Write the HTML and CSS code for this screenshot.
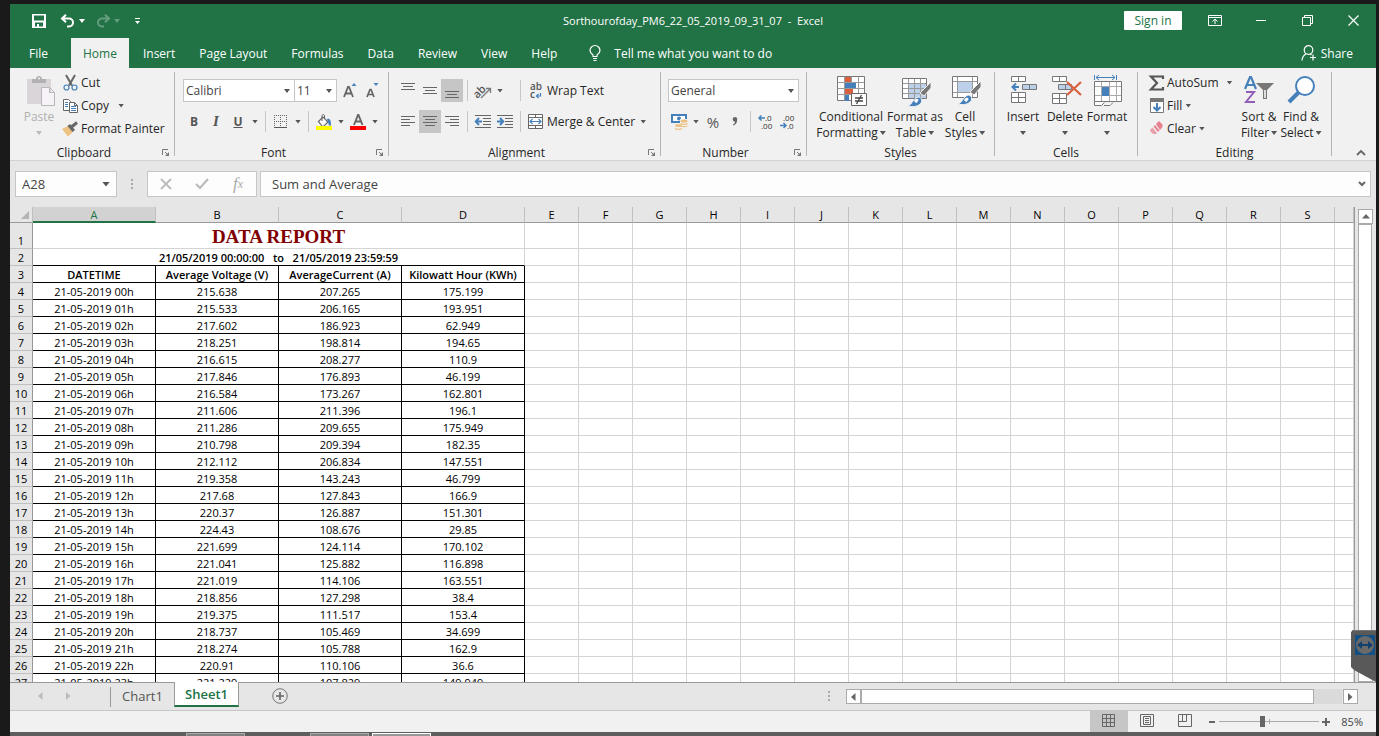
FILE: index.html
```
<!DOCTYPE html>
<html lang="en">
<head>
    <meta charset="UTF-8">
    <meta name="viewport" content="width=device-width, initial-scale=1.0">
    <title>Sorthourofday_PM6_22_05_2019_09_31_07 - Excel</title>
    <link rel="stylesheet" href="styles.css">
</head>
<body>
    <div class="window">
        <!-- Title bar -->
        <header class="titlebar">
            <div class="quick-access">
                <button class="qa-save" aria-label="Save"><svg width="14" height="14" viewBox="0 0 14 14"><path d="M0 0h14v14H0zM2 1.500v5h10v-5zM3 8.500V12.500h2V10h2v2.500h4V8.500z" fill="#fff" fill-rule="evenodd"/></svg></button>
                <button class="qa-undo" aria-label="Undo"><svg width="16" height="14" viewBox="0 0 16 14"><path d="M2 4.500h7a4 4 0 0 1 0 8H7M6 .8L2 4.500l4 3.700" fill="none" stroke="#fff" stroke-width="2"/></svg><span class="caret light"></span></button>
                <button class="qa-redo" aria-label="Redo"><svg width="16" height="14" viewBox="0 0 16 14"><path d="M14 4.500H7a4 4 0 0 0 0 8h2M10 .8l4 3.700-4 3.700" fill="none" stroke="#fff" stroke-width="2"/></svg><span class="caret light"></span></button>
                <button class="qa-more" aria-label="Customize"><svg width="7" height="7" viewBox="0 0 7 7"><path d="M1 0h5v1H1zM1 3h5L3.500 6z" fill="#fff"/></svg></button>
            </div>
            <div class="doc-title">Sorthourofday_PM6_22_05_2019_09_31_07&nbsp; -&nbsp; Excel</div>
            <div class="window-controls">
                <button class="sign-in">Sign in</button>
                <button class="win-btn" aria-label="Ribbon display"><svg width="14" height="11" viewBox="0 0 14 11"><path d="M.5.5h13v10H.5zM.5 2.500h13M7 9V4M4.500 6.500L7 4l2.500 2.500" fill="none" stroke="#fff"/></svg></button>
                <button class="win-btn" aria-label="Minimize"><svg width="10" height="11" viewBox="0 0 10 11"><path d="M0 5.500h10" stroke="#fff"/></svg></button>
                <button class="win-btn" aria-label="Restore"><svg width="11" height="11" viewBox="0 0 11 11"><path d="M.5 2.500h8v8h-8zM2.500 2.500v-2h8v8h-2" fill="none" stroke="#fff"/></svg></button>
                <button class="win-btn" aria-label="Close"><svg width="11" height="11" viewBox="0 0 11 11"><path d="M.5.5l10 10M10.500.5l-10 10" stroke="#fff" stroke-width="1.200"/></svg></button>
            </div>
        </header>

        <!-- Ribbon tabs -->
        <nav class="tabs">
            <button class="tab file">File</button>
            <button class="tab active">Home</button>
            <button class="tab">Insert</button>
            <button class="tab">Page Layout</button>
            <button class="tab">Formulas</button>
            <button class="tab">Data</button>
            <button class="tab">Review</button>
            <button class="tab">View</button>
            <button class="tab">Help</button>
            <button class="tell-me"><svg width="12" height="17" viewBox="0 0 12 17"><path d="M4 11.500V10C2 8.500 1 7.200 1 5.500a5 5 0 0 1 10 0C11 7.200 10 8.500 8 10v1.500zM4 13.500h4M4.500 15.500h3" fill="none" stroke="#fff" stroke-width="1.200"/></svg>Tell me what you want to do</button>
            <button class="share"><svg width="16" height="16" viewBox="0 0 16 16"><circle cx="7.500" cy="5" r="4.300" fill="none" stroke="#fff" stroke-width="1.200"/><path d="M1 15.500c.3-3.500 1.800-5.500 4-6.500M9 9l1.500 1M12 9.500v6M9 12.500h6" fill="none" stroke="#fff" stroke-width="1.200"/></svg>Share</button>
        </nav>

        <!-- Ribbon -->
        <div class="ribbon">
            <section class="group clipboard">
                <div class="group-body">
                    <button class="big-btn disabled">
                        <svg width="32" height="32" viewBox="0 0 32 32"><path d="M4 4h24v25H4z" fill="#d9d5d9"/><path d="M9 8V4h4c0-4 6-4 6 0h4v4z" fill="#b3b0b3"/><circle cx="16" cy="3.500" r="1" fill="#f1f1f1"/><path d="M18.500 12.500h8l5 5v13h-13zM26.500 12.500v5h5" fill="#f7f2f7" stroke="#b9b6b9"/></svg>
                        <span>Paste</span><span class="line2"><i class="caret"></i></span>
                    </button>
                    <div class="small-col">
                        <button class="small-btn"><svg width="16" height="16" viewBox="0 0 16 16"><path d="M4 0L10 10.500M13 0L7 10.500" stroke="#666" stroke-width="2" fill="none"/><circle cx="4.500" cy="12.500" r="2.500" fill="none" stroke="#4580bb" stroke-width="1.200"/><circle cx="12.500" cy="12.500" r="2.500" fill="none" stroke="#4580bb" stroke-width="1.200"/></svg>Cut</button>
                        <button class="small-btn"><svg width="16" height="16" viewBox="0 0 16 16"><path d="M1.500 1.500h5l2 2v9h-7z" fill="#fff" stroke="#666"/><path d="M3 4.500h3M3 6.500h3M3 8.500h3" stroke="#4580bb"/><path d="M7.500 4.500h5l3 3v7h-8zM12.500 4.500v3h3" fill="#fff" stroke="#666"/><path d="M9 8.500h5M9 10.500h5M9 12.500h5" stroke="#4580bb"/></svg>Copy<i class="caret copy-caret"></i></button>
                        <button class="small-btn"><svg width="16" height="16" viewBox="0 0 16 16"><path d="M0 8l6-3 5 6-5 4.500z" fill="#edc182"/><path d="M5.500 5L8 3l5 6-2.500 2z" fill="#666"/><path d="M9.500 6L15 1.500" stroke="#666" stroke-width="3"/></svg>Format Painter</button>
                    </div>
                </div>
                <div class="group-foot"><span>Clipboard</span><button class="launcher" aria-label="Clipboard settings"><svg width="8" height="8" viewBox="0 0 8 8"><path d="M.5 6V.5H6M3 3l3 3" fill="none" stroke="#777"/><path d="M7 3v4H3z" fill="#777"/></svg></button></div>
            </section>

            <section class="group font">
                <div class="group-body rows">
                    <div class="row">
                        <span class="select-box font-name"><select aria-label="Font"><option>Calibri</option></select></span>
                        <span class="select-box font-size"><select aria-label="Font size"><option>11</option></select></span>
                        <button class="icon-btn grow" aria-label="Increase font size"><svg width="14" height="16" viewBox="0 0 14 16"><path d="M1 14L5 4h1l4 10M2.500 10.500h6" fill="none" stroke="#666" stroke-width="1.800"/><path d="M8.500 3L11 0l2.500 3z" fill="#4580bb"/></svg></button>
                        <button class="icon-btn" aria-label="Decrease font size"><svg width="14" height="16" viewBox="0 0 14 16"><path d="M2 14l3-7.500h1L9 14M3 11.500h5" fill="none" stroke="#666" stroke-width="1.700"/><path d="M8.500 0h5L11 3z" fill="#4580bb"/></svg></button>
                    </div>
                    <div class="row">
                        <button class="icon-btn bold">B</button>
                        <button class="icon-btn italic">I</button>
                        <button class="icon-btn underline">U</button>
                        <button class="drop" aria-label="Underline options"><i class="caret"></i></button>
                        <i class="vline"></i>
                        <button class="icon-btn" aria-label="Borders"><svg width="14" height="14" viewBox="0 0 14 14"><path d="M.5 0v12M6.500 0v12M12.500 0v12M0 .5h13M0 6.500h13" stroke="#666" stroke-dasharray="1 1"/><path d="M0 12.500h13" stroke="#555"/></svg></button>
                        <button class="drop" aria-label="Border options"><i class="caret"></i></button>
                        <i class="vline"></i>
                        <button class="icon-btn" aria-label="Fill color"><svg width="16" height="16" viewBox="0 0 16 16"><path d="M2.500 7.500L7 3l5 5-4.500 4.500h-1z" fill="#fff" stroke="#666" stroke-width="1.200"/><path d="M6 7V2c0-2 2.500-2 2.500 0v2" fill="none" stroke="#666"/><path d="M11 5c3-1 4 1 4 6.500h-2z" fill="#4580bb"/><path d="M0 12h16v4H0z" fill="#ff0"/></svg></button>
                        <button class="drop" aria-label="Fill options"><i class="caret"></i></button>
                        <button class="icon-btn" aria-label="Font color"><svg width="16" height="16" viewBox="0 0 16 16"><path d="M4 11l4-10h.5l4 10M5.500 7.500h5.500" fill="none" stroke="#666" stroke-width="1.900"/><path d="M0 12h16v4H0z" fill="red"/></svg></button>
                        <button class="drop" aria-label="Font color options"><i class="caret"></i></button>
                    </div>
                </div>
                <div class="group-foot"><span>Font</span><button class="launcher" aria-label="Font settings"><svg width="8" height="8" viewBox="0 0 8 8"><path d="M.5 6V.5H6M3 3l3 3" fill="none" stroke="#777"/><path d="M7 3v4H3z" fill="#777"/></svg></button></div>
            </section>

            <section class="group alignment">
                <div class="group-body rows">
                    <div class="row">
                        <button class="icon-btn" aria-label="Top align"><svg width="14" height="16" viewBox="0 0 14 16"><path d="M0 .5h14M2 3.500h10M0 6.500h14" stroke="#666"/></svg></button>
                        <button class="icon-btn" aria-label="Middle align"><svg width="14" height="16" viewBox="0 0 14 16"><path d="M0 4.500h14M2 7.500h10M0 10.500h14" stroke="#666"/></svg></button>
                        <button class="icon-btn pressed" aria-label="Bottom align"><svg width="14" height="16" viewBox="0 0 14 16"><path d="M0 8.500h14M2 11.500h10M0 14.500h14" stroke="#666"/></svg></button>
                        <i class="vline"></i>
                        <button class="icon-btn" aria-label="Orientation"><svg width="16" height="16" viewBox="0 0 16 16"><text x="-2" y="12" font-size="11" font-weight="600" fill="#555" transform="rotate(-45 5 9)">ab</text><path d="M6 15l9-9M11 5.500h4.500V10" fill="none" stroke="#777" stroke-width="1.300"/></svg></button>
                        <button class="drop" aria-label="Orientation options"><i class="caret"></i></button>
                        <i class="vline gap"></i>
                        <button class="small-btn wrap"><svg width="16" height="16" viewBox="0 0 16 16"><text x="2" y="7" font-size="10" font-weight="600" fill="#555">ab</text><text x="2" y="15" font-size="10" font-weight="600" fill="#555">c</text><path d="M12.500 10v3H8.500M10.500 11l-2 2 2 2" fill="none" stroke="#4580bb" stroke-width="1.200"/></svg>Wrap Text</button>
                    </div>
                    <div class="row">
                        <button class="icon-btn" aria-label="Align left"><svg width="14" height="12" viewBox="0 0 14 12"><path d="M0 .5h14M0 3.500h9M0 6.500h14M0 9.500h9" stroke="#666"/></svg></button>
                        <button class="icon-btn pressed" aria-label="Center"><svg width="14" height="12" viewBox="0 0 14 12"><path d="M0 .5h14M2 3.500h10M0 6.500h14M2 9.500h10" stroke="#666"/></svg></button>
                        <button class="icon-btn" aria-label="Align right"><svg width="14" height="12" viewBox="0 0 14 12"><path d="M0 .5h14M5 3.500h9M0 6.500h14M5 9.500h9" stroke="#666"/></svg></button>
                        <i class="vline"></i>
                        <button class="icon-btn" aria-label="Decrease indent"><svg width="16" height="14" viewBox="0 0 16 14"><path d="M0 .5h16M8 3.500h8M8 6.500h8M8 9.500h8M0 12.500h16" stroke="#666"/><path d="M1 6.500h6M4 3L.8 6.500 4 10" stroke="#4580bb" stroke-width="2" fill="none"/></svg></button>
                        <button class="icon-btn" aria-label="Increase indent"><svg width="16" height="14" viewBox="0 0 16 14"><path d="M0 .5h16M8 3.500h8M8 6.500h8M8 9.500h8M0 12.500h16" stroke="#666"/><path d="M0 6.500h6M3 3l3.200 3.500L3 10" stroke="#4580bb" stroke-width="2" fill="none"/></svg></button>
                        <i class="vline"></i>
                        <button class="small-btn merge"><svg width="16" height="16" viewBox="0 0 16 16"><path d="M.5.500h14v14H.5zM.5 3.500h14M.5 11.500h14M7.500.5v3M7.500 11.500v3" fill="#fff" stroke="#666"/><path d="M2 7.500h11M4.500 5L2 7.500 4.500 10M10.500 5L13 7.500 10.500 10" fill="none" stroke="#4580bb" stroke-width="1.200"/></svg>Merge &amp; Center</button>
                        <button class="drop" aria-label="Merge options"><i class="caret"></i></button>
                    </div>
                </div>
                <div class="group-foot"><span>Alignment</span><button class="launcher" aria-label="Alignment settings"><svg width="8" height="8" viewBox="0 0 8 8"><path d="M.5 6V.5H6M3 3l3 3" fill="none" stroke="#777"/><path d="M7 3v4H3z" fill="#777"/></svg></button></div>
            </section>

            <section class="group number">
                <div class="group-body rows">
                    <div class="row">
                        <span class="select-box number-format"><select aria-label="Number format"><option>General</option></select></span>
                    </div>
                    <div class="row">
                        <button class="icon-btn" aria-label="Accounting format"><svg width="17" height="16" viewBox="0 0 17 16"><path d="M1 1h14v7H1z" fill="#fff" stroke="#4580bb" stroke-width="2"/><circle cx="8" cy="4.500" r="2" fill="#4580bb"/><path d="M9 5h8v9H5V9h4z" fill="#f1f1f1"/><g fill="#edc182"><ellipse cx="13" cy="7" rx="3.500" ry="1.600"/><path d="M9.500 9c2 1 5 1 7 0v1.200c-2 1-5 1-7 0zM9.500 11.500c2 1 5 1 7 0v1c-2 1-5 1-7 0z"/><ellipse cx="7.500" cy="11.500" rx="3.500" ry="1.500"/><path d="M4 14c2 1 5 1 7 0v1.200c-2 1-5 1-7 0z"/></g></svg></button>
                        <button class="drop" aria-label="Accounting options"><i class="caret"></i></button>
                        <button class="icon-btn percent">%</button>
                        <button class="icon-btn" aria-label="Comma style"><svg width="6" height="9" viewBox="0 0 6 9"><path d="M3 0a2.300 2.300 0 0 1 2.200 2.500C5.200 5.500 4 7.500 1.500 8.500L1 7.500C2.200 7 2.800 6 3 4.700A2.300 2.300 0 0 1 3 0z" fill="#666"/></svg></button>
                        <i class="vline"></i>
                        <button class="icon-btn" aria-label="Increase decimal"><svg width="16" height="16" viewBox="0 0 16 16"><text x="7" y="7" font-size="8" fill="#333">.0</text><text x="3" y="15" font-size="8" fill="#333">.00</text><path d="M1 4h6M3.500 1.500L1 4l2.500 2.500" stroke="#4580bb" stroke-width="1.500" fill="none"/></svg></button>
                        <button class="icon-btn" aria-label="Decrease decimal"><svg width="16" height="16" viewBox="0 0 16 16"><text x="3" y="7" font-size="8" fill="#333">.00</text><text x="7" y="15" font-size="8" fill="#333">.0</text><path d="M0 11.500h6M3.500 9L6 11.500 3.500 14" stroke="#4580bb" stroke-width="1.500" fill="none"/></svg></button>
                    </div>
                </div>
                <div class="group-foot"><span>Number</span><button class="launcher" aria-label="Number settings"><svg width="8" height="8" viewBox="0 0 8 8"><path d="M.5 6V.5H6M3 3l3 3" fill="none" stroke="#777"/><path d="M7 3v4H3z" fill="#777"/></svg></button></div>
            </section>

            <section class="group styles">
                <div class="group-body">
                    <button class="big-btn conditional">
                        <svg width="32" height="32" viewBox="0 0 32 32"><path d="M2.500 1.500h27v24h-27z" fill="#fff" stroke="#777"/><path d="M9.500 1.500v24M16.500 1.500v24M23.500 1.500v24M2.500 7.500h27M2.500 13.500h27M2.500 19.500h27" stroke="#999"/><path d="M10 2h6v5h-6zM10 14h8v5h-8z" fill="#d9603f"/><path d="M10 8h11v5H10zM10 20h4v6h-4z" fill="#4580bb"/><path d="M16.500 18.500h15v12h-15z" fill="#fff" stroke="#666"/><path d="M20 23h8M20 26h8M26.500 20l-5 9" stroke="#444" stroke-width="1.300"/></svg>
                        <span>Conditional</span><span class="line2">Formatting<i class="caret"></i></span>
                    </button>
                    <button class="big-btn as-table">
                        <svg width="32" height="32" viewBox="0 0 32 32"><path d="M3.500 3.500h24v20h-24z" fill="#fff" stroke="#777"/><path d="M10 9h17v14H10z" fill="#bdd0e9"/><path d="M9.500 4v19M15.500 4v19M21.500 4v19M4 8.500h23M4 13.500h23M4 18.500h23" stroke="#999"/><path d="M32 7v6l-7 8-4-3z" fill="#777" stroke="#f1f1f1"/><path d="M9 31c4-1 5-8 10-9 4 0 5 5 2 7-3 3-8 3-12 2z" fill="#4580bb" stroke="#f1f1f1"/><path d="M15 26c2-4 6-2 4 0-1 1-1 2-2 2" fill="#fff"/></svg>
                        <span>Format as</span><span class="line2">Table<i class="caret"></i></span>
                    </button>
                    <button class="big-btn cell-styles">
                        <svg width="32" height="32" viewBox="0 0 32 32"><path d="M3.500 1.500h25v21h-25z" fill="#fff" stroke="#777"/><path d="M8.500 2v20M23.500 2v20M4 6.500h24M4 17.500h24" stroke="#999"/><path d="M9 7h14v10H9z" fill="#bdd0e9"/><path d="M32 6v6l-7 8-4-3z" fill="#777" stroke="#f1f1f1"/><path d="M9 29c4-1 5-7 10-9 4 0 5 5 2 7-3 3-8 3-12 2z" fill="#4580bb" stroke="#f1f1f1"/><path d="M15 25c2-4 6-2 4 0-1 1-1 2-2 2" fill="#fff"/></svg>
                        <span>Cell</span><span class="line2">Styles<i class="caret"></i></span>
                    </button>
                </div>
                <div class="group-foot"><span>Styles</span></div>
            </section>

            <section class="group cells">
                <div class="group-body">
                    <button class="big-btn">
                        <svg width="32" height="32" viewBox="0 0 32 32"><path d="M4.500 1.500h14v5h-14zM11.500 1.500v5M4.500 17.500h14v10h-14zM11.500 17.500v10M4.500 22.500h14" fill="#fff" stroke="#777"/><path d="M15.500 9.500h14v5h-14zM22.500 9.500v5" fill="#bdd0e9" stroke="#777"/><path d="M6 12h6M9 8.500L5.500 12 9 15.500" fill="none" stroke="#4580bb" stroke-width="2"/></svg>
                        <span>Insert</span><span class="line2"><i class="caret"></i></span>
                    </button>
                    <button class="big-btn">
                        <svg width="32" height="32" viewBox="0 0 32 32"><path d="M3.500 1.500h14v5h-14zM10.500 1.500v5M3.500 18.500h14v10h-14zM10.500 18.500v10M3.500 23.500h14" fill="#fff" stroke="#777"/><path d="M9.500 9.500h13v5h-13zM16.500 9.500v5" fill="#bdd0e9" stroke="#777"/><path d="M18 7l14 13M32 7L18 20" stroke="#d9603f" stroke-width="2.200"/></svg>
                        <span>Delete</span><span class="line2"><i class="caret"></i></span>
                    </button>
                    <button class="big-btn">
                        <svg width="32" height="32" viewBox="0 0 32 32"><path d="M3.500 6.500h27v20h-27z" fill="#fff" stroke="#777"/><path d="M10.500 7v19M18.500 7v19M25.500 7v19M4 11.500h26M4 20.500h26" stroke="#aaa"/><path d="M11 12h7v9h-7z" fill="#4580bb"/><path d="M3.500 0v5M25.500 0v5M5 2.500h19M8 0L5 2.500 8 5M21 0l3 2.500L21 5" fill="none" stroke="#4580bb"/><path d="M3.500 27v3.500h7l3-3M13 30.500h6l3-3" fill="#fff" stroke="#777"/></svg>
                        <span>Format</span><span class="line2"><i class="caret"></i></span>
                    </button>
                </div>
                <div class="group-foot"><span>Cells</span></div>
            </section>

            <section class="group editing">
                <div class="group-body">
                    <div class="small-col">
                        <button class="small-btn"><svg width="16" height="16" viewBox="0 0 16 16"><path d="M15 4V1.500H3L9 8l-6 6.500h12V12" fill="none" stroke="#555" stroke-width="2.200"/></svg>AutoSum<i class="caret sum-caret"></i></button>
                        <button class="small-btn"><svg width="16" height="16" viewBox="0 0 16 16"><path d="M2.500 1.500h13v13h-13z" fill="#fff" stroke="#777"/><path d="M2 0h14v4H2z" fill="#777"/><path d="M9 5v7M5.500 9L9 12.500 12.500 9" fill="none" stroke="#4580bb" stroke-width="2"/></svg>Fill<i class="caret"></i></button>
                        <button class="small-btn"><svg width="16" height="16" viewBox="0 0 16 16"><path d="M8 3l3-3 3.500 3.500V6L12 9z" fill="#e8808f"/><path d="M7 4l4.500 5.500L10 11 5.500 5.500z" fill="#e8808f"/><path d="M4.500 6.500L9 12l-1 1H5L2 10V9z" fill="#e8a0ab"/></svg>Clear<i class="caret"></i></button>
                    </div>
                    <button class="big-btn">
                        <svg width="32" height="32" viewBox="0 0 32 32"><path d="M2 14L7 2h1l5 12M4 10h7" fill="none" stroke="#4580bb" stroke-width="2.200"/><path d="M3 17h8l-8 10h9" fill="none" stroke="#925fb8" stroke-width="2"/><path d="M13 8h18l-7 7v9h-4v-9z" fill="#777"/><path d="M21 15h2v8h-2z" fill="#ddd"/></svg>
                        <span>Sort &amp;</span><span class="line2">Filter<i class="caret"></i></span>
                    </button>
                    <button class="big-btn">
                        <svg width="32" height="32" viewBox="0 0 32 32"><path d="M14 17L4 27" stroke="#4580bb" stroke-width="4"/><circle cx="20" cy="11" r="9" fill="#fff" stroke="#4580bb" stroke-width="2"/></svg>
                        <span>Find &amp;</span><span class="line2">Select<i class="caret"></i></span>
                    </button>
                </div>
                <div class="group-foot"><span>Editing</span></div>
            </section>
            <button class="collapse" aria-label="Collapse ribbon"><svg width="10" height="7" viewBox="0 0 10 7"><path d="M1 6l4-4 4 4" fill="none" stroke="#666" stroke-width="1.800"/></svg></button>
        </div>

        <!-- Formula bar -->
        <div class="formula-bar">
            <div class="name-box"><input type="text" value="A28" aria-label="Name box"><i class="caret big"></i></div>
            <svg class="grip" width="2" height="11" viewBox="0 0 2 11"><path d="M0 0h2v2H0zM0 4h2v2H0zM0 8h2v2H0z" fill="#aaa"/></svg>
            <div class="fx-buttons">
                <button aria-label="Cancel"><svg width="12" height="12" viewBox="0 0 12 12"><path d="M1 1l10 10M11 1L1 11" stroke="#bbb" stroke-width="1.800"/></svg></button>
                <button aria-label="Enter"><svg width="14" height="12" viewBox="0 0 14 12"><path d="M1 6l4 4 8-9" fill="none" stroke="#bbb" stroke-width="2.200"/></svg></button>
                <button class="fx" aria-label="Insert function">f<sub>x</sub></button>
            </div>
            <div class="formula-box">
                <input type="text" value="Sum and Average" aria-label="Formula">
                <button aria-label="Expand formula bar"><svg width="8" height="6" viewBox="0 0 8 6"><path d="M1 1l3 3 3-3" fill="none" stroke="#666" stroke-width="2"/></svg></button>
            </div>
        </div>

        <!-- Worksheet -->
        <main class="workspace">
            <div class="sheet">
                <table class="grid">
                    <colgroup id="cols"></colgroup>
                    <thead><tr id="letters"></tr></thead>
                    <tbody id="rows"></tbody>
                </table>
            </div>
            <div class="v-scroll">
                <button aria-label="Scroll up"><svg width="8" height="5" viewBox="0 0 8 5"><path d="M0 4.500L4 0l4 4.500z" fill="#666"/></svg></button>
                <div class="v-thumb"></div>
                <button aria-label="Scroll down"><svg width="8" height="5" viewBox="0 0 8 5"><path d="M0 0h8L4 4.500z" fill="#666"/></svg></button>
            </div>
        </main>

        <footer class="sheet-bar">
            <button class="nav-arrow" aria-label="Previous sheet"><svg width="5" height="8" viewBox="0 0 5 8"><path d="M4.500 0v8L0 4z" fill="#bbb"/></svg></button>
            <button class="nav-arrow" aria-label="Next sheet"><svg width="5" height="8" viewBox="0 0 5 8"><path d="M0 0v8l4.500-4z" fill="#bbb"/></svg></button>
            <button class="sheet-tab">Chart1</button>
            <button class="sheet-tab current">Sheet1</button>
            <button class="add-sheet" aria-label="New sheet"><svg width="16" height="16" viewBox="0 0 16 16"><circle cx="8" cy="8" r="7.300" fill="none" stroke="#777"/><path d="M8 4v8M4 8h8" stroke="#666" stroke-width="1.600"/></svg></button>
            <svg class="bar-grip" width="2" height="11" viewBox="0 0 2 11"><path d="M0 0h2v2H0zM0 4h2v2H0zM0 8h2v2H0z" fill="#aaa"/></svg>
            <div class="h-scroll">
                <button aria-label="Scroll left"><svg width="5" height="8" viewBox="0 0 5 8"><path d="M4.500 0v8L0 4z" fill="#666"/></svg></button>
                <div class="h-thumb"></div>
                <div class="h-track"></div>
                <button aria-label="Scroll right"><svg width="5" height="8" viewBox="0 0 5 8"><path d="M0 0v8l4.500-4z" fill="#666"/></svg></button>
            </div>
        </footer>

        <div class="status-bar">
            <button class="view-btn on" aria-label="Normal"><svg width="14" height="13" viewBox="0 0 14 13"><path d="M.5.5h12v12H.5zM4.500.5v12M8.500.5v12M.5 4.500h12M.5 8.500h12" fill="none" stroke="#666"/></svg></button>
            <button class="view-btn" aria-label="Page layout"><svg width="14" height="13" viewBox="0 0 14 13"><path d="M.5.5h13v12H.5zM3.500 2.500h7v8h-7zM5 4.500h4M5 6.500h4M5 8.500h4" fill="none" stroke="#666"/></svg></button>
            <button class="view-btn" aria-label="Page break preview"><svg width="14" height="13" viewBox="0 0 14 13"><path d="M.5.5h13v12H.5zM.5 7.500h8v-7M4.500.5v7" fill="none" stroke="#666"/></svg></button>
            <button class="zoom-btn" aria-label="Zoom out"><svg width="8" height="8" viewBox="0 0 8 8"><path d="M1 4h6" stroke="#666" stroke-width="2"/></svg></button>
            <input class="zoom" type="range" min="0" max="100" value="43" aria-label="Zoom">
            <button class="zoom-btn" aria-label="Zoom in"><svg width="8" height="8" viewBox="0 0 8 8"><path d="M0 4h8M4 0v8" stroke="#666" stroke-width="2"/></svg></button>
            <span class="zoom-value">85%</span>
        </div>
        <div class="taskbar"><i></i><i></i><i class="front"></i></div>

        <!-- Remote session handle -->
        <button class="remote" aria-label="Remote session">
            <svg width="25" height="52" viewBox="0 0 25 52"><path d="M2 0h23v52L3 40l-3-3V2z" fill="#595959"/><path d="M1 0h24v1H1z" fill="#777"/><path d="M4 5h20v20H4z" fill="#125083"/><circle cx="14" cy="15" r="9" fill="#6a6a6a"/><path d="M6 15l5-4v3h6v-3l5 4-5 4v-3h-6v3z" fill="#123f6c"/></svg>
        </button>
    </div>
    <script src="script.js"></script>
</body>
</html>
```
FILE: styles.css
```
* {
    box-sizing: border-box;
}

body {
    margin: 0;
    height: 100vh;
    padding: 4px 3px 0 10px;
    background: #1a1a1a;
    overflow: hidden;
    font-family: "Open Sans", "Noto Sans", sans-serif;
    font-size: 12px;
    color: #262626;
}

button,
input,
select {
    margin: 0;
    padding: 0;
    border: none;
    border-radius: 0;
    background: none;
    font: inherit;
    color: inherit;
}

button {
    display: flex;
    align-items: center;
    justify-content: center;
    white-space: nowrap;
}

svg {
    display: block;
    flex: none;
    overflow: visible;
}

i {
    font-style: normal;
}

.window {
    position: relative;
    height: 100%;
    display: flex;
    flex-direction: column;
    background: #e6e6e6;
}

.caret {
    flex: none;
    width: 6px;
    height: 4px;
    background: #555;
    clip-path: polygon(0 0, 100% 0, 50% 100%);
}

.caret.light {
    background: #fff;
}

.caret.big {
    width: 8px;
    height: 5px;
}

/* Title bar */
.titlebar {
    flex: none;
    height: 34px;
    display: grid;
    grid-template-columns: 1fr auto 1fr;
    align-items: center;
    background: #217346;
    color: #fff;
}

.doc-title {
    padding-bottom: 2px;
    font-size: 11px;
}

.quick-access {
    display: flex;
    align-items: center;
    padding-left: 22px;
}

.qa-undo,
.qa-redo {
    gap: 3px;
}

.qa-undo {
    margin-left: 14px;
}

.qa-redo {
    margin-left: 10px;
    opacity: 0.3;
}

.qa-more {
    margin-left: 14px;
}

.window-controls {
    display: flex;
    align-items: center;
    justify-content: flex-end;
    padding-bottom: 2px;
}

.sign-in {
    width: 58px;
    height: 19px;
    margin-right: 10px;
    border-radius: 1px;
    background: #fff;
    color: #217346;
}

.win-btn {
    width: 46px;
    height: 32px;
}

/* Ribbon tabs */
.tabs {
    flex: none;
    height: 30px;
    display: flex;
    background: #217346;
    color: #fff;
}

.tab {
    padding: 0 12px;
}

.tab.file {
    width: 61px;
    padding: 0 4px 0 0;
}

.tab.active {
    margin-right: 2px;
    background: #f1f1f1;
    color: #217346;
}

.tell-me {
    gap: 13px;
    margin-left: 20px;
}

.share {
    gap: 4px;
    margin-left: auto;
    padding-right: 23px;
}

/* Ribbon */
.ribbon {
    flex: none;
    height: 93px;
    display: flex;
    padding: 4px 0;
    border-bottom: 1px solid #d2d2d2;
    background: #f1f1f1;
}

.group {
    flex: none;
    display: flex;
    flex-direction: column;
    border-right: 1px solid #b5b5b5;
}

.clipboard { width: 165px; }
.font { width: 214px; }
.alignment { width: 272px; }
.number { width: 146px; }
.styles { width: 188px; }
.cells { width: 143px; }
.editing { width: 194px; }

.group-body {
    flex: 1;
    display: flex;
    align-items: flex-start;
    padding-left: 8px;
}

.cells .group-body {
    padding-left: 7px;
}

.group-body.rows {
    flex-direction: column;
    gap: 8px;
    padding-top: 7px;
}

.group-foot {
    display: flex;
    height: 8px;
    line-height: 10px;
}

.group-foot span {
    flex: 1;
    text-align: center;
}

.launcher {
    width: 16px;
    height: 9px;
}

.big-btn {
    width: 42px;
    flex-direction: column;
    padding-top: 3px;
    line-height: 16px;
}

.big-btn svg {
    margin-bottom: 2px;
}

.big-btn.disabled {
    color: #b0b0b0;
}

.big-btn.disabled .caret {
    background: #bbb;
}

.conditional { width: 72px; }
.as-table { width: 56px; }
.cell-styles { width: 44px; }

.line2 {
    height: 16px;
    display: flex;
    align-items: center;
    gap: 2px;
}

.small-col {
    display: flex;
    flex-direction: column;
    align-items: flex-start;
}

.editing .small-col {
    width: 92px;
}

.small-btn {
    height: 23px;
    gap: 3px;
    padding: 0 2px 2px;
}

.copy-caret {
    margin-left: 6px;
}

.sum-caret {
    margin-left: 5px;
}

.row {
    height: 23px;
    display: flex;
    align-items: center;
}

.row .small-btn {
    padding-bottom: 0;
}

.select-box {
    position: relative;
    height: 23px;
    border: 1px solid #c6c6c6;
    background: #fff;
}

.select-box::after {
    content: "";
    position: absolute;
    top: 9px;
    right: 4px;
    width: 6px;
    height: 4px;
    background: #555;
    clip-path: polygon(0 0, 100% 0, 50% 100%);
    pointer-events: none;
}

.select-box select {
    width: 100%;
    height: 21px;
    padding-left: 2px;
    appearance: none;
    color: #444;
}

.font-name { width: 112px; }
.font-size { width: 43px; margin-left: -1px; }
.number-format { width: 131px; }

.number .group-body {
    padding-left: 7px;
}

.icon-btn {
    width: 22px;
    height: 23px;
    color: #555;
}

.icon-btn.grow {
    margin-left: 2px;
}

.pressed {
    background: #c6c6c6;
}

.bold,
.italic,
.underline {
    font-weight: bold;
}

.italic {
    font-family: "Liberation Serif", serif;
    font-size: 15px;
    font-style: italic;
}

.underline {
    text-decoration: underline;
}

.drop {
    width: 12px;
    height: 23px;
}

.vline {
    width: 1px;
    height: 21px;
    margin: 0 4px;
    background: #c6c6c6;
}

.vline.gap {
    margin-left: 14px;
}

.wrap,
.merge {
    margin-left: 1px;
}

.percent {
    font-size: 15px;
}

.collapse {
    align-self: flex-end;
    margin-left: auto;
    margin-right: 10px;
}

/* Formula bar */
.formula-bar {
    flex: none;
    display: flex;
    align-items: center;
    height: 46px;
    padding: 0 5px;
    font-size: 13px;
    color: #444;
}

.name-box,
.fx-buttons,
.formula-box {
    height: 26px;
    display: flex;
    align-items: center;
    border: 1px solid #c6c6c6;
    background: #fdfdfd;
}

.name-box {
    width: 102px;
    padding: 0 6px;
}

.name-box input {
    flex: 1;
    min-width: 0;
}

.grip {
    margin: 0 14px;
}

.fx-buttons {
    width: 110px;
}

.fx-buttons button {
    flex: 1;
}

.fx {
    color: #aaa;
    font-family: "Liberation Serif", serif;
    font-size: 17px;
    font-style: italic;
    line-height: 20px;
}

.fx sub {
    font-size: 12px;
    line-height: 12px;
}

.formula-box {
    flex: 1;
    margin-left: 3px;
    padding: 0 4px 0 11px;
}

.formula-box input {
    flex: 1;
}

/* Worksheet */
.workspace {
    flex: 1;
    min-height: 0;
    display: flex;
}

.sheet {
    flex: 1;
    min-width: 0;
    overflow: hidden;
    border-right: 1px solid #999;
    background: #fff;
}

.grid {
    width: 100%;
    table-layout: fixed;
    border-collapse: separate;
    border-spacing: 0;
    font-size: 11px;
    line-height: 14px;
    color: #000;
}

.col-head { width: 23px; }
.col-data { width: 123px; }
.col-blank { width: 54px; }

.grid th,
.grid td {
    height: 17px;
    padding: 0;
    border-right: 1px solid #d4d4d4;
    border-bottom: 1px solid #d4d4d4;
    text-align: center;
    white-space: nowrap;
}

.grid td {
    padding-top: 2px;
}

.grid th {
    border-color: #c0c0c0;
    background: #e6e6e6;
    font-weight: normal;
}

.grid tbody th {
    padding-top: 2px;
    border-right-color: #999;
    vertical-align: bottom;
}

.grid thead th {
    height: 16px;
    border-bottom-color: #999;
}

.grid thead .corner svg {
    margin-left: 11px;
}

.grid thead .selected {
    border-bottom: 2px solid #217346;
    background: #d2d2d2;
    line-height: 13px;
    color: #217346;
}

.grid .title-row td {
    height: 26px;
    line-height: 22px;
}

.grid .report-title {
    font-family: "Liberation Serif", serif;
    font-size: 19px;
    font-weight: bold;
    color: #800000;
    vertical-align: bottom;
}

.grid .report-range {
    border-bottom-color: #000;
    font-weight: 600;
    white-space: pre;
}

.grid .cell {
    border-right-color: #000;
    border-bottom-color: #000;
}

.grid .head {
    font-weight: 600;
}

.v-scroll {
    flex: none;
    width: 21px;
    display: flex;
    flex-direction: column;
    padding: 2px 4px 0 3px;
}

.v-scroll button,
.h-scroll button {
    flex: none;
    width: 15px;
    height: 15px;
    border: 1px solid #aaa;
    background: #fff;
}

.v-thumb {
    flex: 1;
    border: 1px solid #aaa;
    background: #fff;
}

/* Sheet tabs and horizontal scrollbar */
.sheet-bar {
    flex: none;
    height: 29px;
    display: flex;
    align-items: center;
    border-top: 1px solid #999;
    border-bottom: 1px solid #c6c6c6;
    font-size: 13px;
    color: #555;
}

.nav-arrow {
    width: 28px;
    height: 20px;
    padding-bottom: 2px;
}

.nav-arrow:first-child {
    margin-left: 16px;
}

.sheet-tab {
    width: 64px;
    height: 20px;
    margin-left: 28px;
    padding-bottom: 2px;
    border-left: 1px solid #999;
}

.sheet-tab.current {
    align-self: flex-start;
    width: 65px;
    height: 25px;
    margin: -1px 0 0;
    padding: 1px 0 0;
    border: 1px solid #999;
    border-top: none;
    border-bottom: 2px solid #217346;
    background: #fff;
    font-weight: 600;
    color: #217346;
}

.add-sheet {
    margin-left: 33px;
    padding-bottom: 2px;
}

.bar-grip {
    margin-left: auto;
}

.h-scroll {
    width: 37.5%;
    display: flex;
    margin: 0 18px 0 16px;
}

.h-thumb {
    flex: 1;
    border: 1px solid #aaa;
    background: #fff;
}

.h-track {
    width: 28px;
    margin-right: 1px;
    background: #dadada;
}

/* Status bar */
.status-bar {
    flex: none;
    height: 21px;
    display: flex;
    align-items: center;
    justify-content: flex-end;
    padding-right: 13px;
    background: #f1f1f1;
    font-size: 11px;
    color: #444;
}

.view-btn {
    width: 38px;
    height: 21px;
    padding-bottom: 2px;
}

.view-btn.on {
    background: #c6c6c6;
}

.zoom-btn {
    width: 8px;
    height: 20px;
}

.zoom-btn:nth-child(4) {
    margin-left: 4px;
}

.zoom {
    width: 100px;
    height: 11px;
    margin: 0 3px;
    appearance: none;
    background:
        linear-gradient(#aaa, #aaa) 50% 50% / 1px 5px no-repeat,
        linear-gradient(#aaa, #aaa) 50% 50% / 100% 1px no-repeat;
}

.zoom::-webkit-slider-thumb {
    appearance: none;
    width: 5px;
    height: 11px;
    background: #666;
}

.zoom-value {
    margin-left: 11px;
    padding-bottom: 1px;
}

.taskbar {
    flex: none;
    height: 4px;
    display: flex;
    background: #5e5e5e;
    padding-left: 176px;
}

.taskbar i {
    width: 59px;
    height: 3px;
    margin-top: 1px;
    border: 1px solid #aaa;
    border-bottom: none;
    background: #808080;
}

.taskbar i:nth-child(2) {
    margin-left: 65px;
}

.taskbar .front {
    margin-left: 3px;
    border-color: #fff;
    background: #999;
}

/* Floats over the scrollbar at the right edge */
.remote {
    position: absolute;
    right: 0;
    bottom: 54px;
}
```
FILE: script.js
```
const letters = 'ABCDEFGHIJKLMNOPQRS'.split('');

const readings = [
    ['215.638', '207.265', '175.199'],
    ['215.533', '206.165', '193.951'],
    ['217.602', '186.923', '62.949'],
    ['218.251', '198.814', '194.65'],
    ['216.615', '208.277', '110.9'],
    ['217.846', '176.893', '46.199'],
    ['216.584', '173.267', '162.801'],
    ['211.606', '211.396', '196.1'],
    ['211.286', '209.655', '175.949'],
    ['210.798', '209.394', '182.35'],
    ['212.112', '206.834', '147.551'],
    ['219.358', '143.243', '46.799'],
    ['217.68', '127.843', '166.9'],
    ['220.37', '126.887', '151.301'],
    ['224.43', '108.676', '29.85'],
    ['221.699', '124.114', '170.102'],
    ['221.041', '125.882', '116.898'],
    ['221.019', '114.106', '163.551'],
    ['218.856', '127.298', '38.4'],
    ['219.375', '111.517', '153.4'],
    ['218.737', '105.469', '34.699'],
    ['218.274', '105.788', '162.9'],
    ['220.91', '110.106', '36.6'],
    ['221.229', '107.829', '149.949']
];

// E to S plus the column cut off at the edge
const blanks = '<td></td>'.repeat(16);

document.getElementById('cols').innerHTML =
    '<col class="col-head">' +
    '<col class="col-data">'.repeat(4) +
    '<col class="col-blank">'.repeat(15) +
    '<col>';

document.getElementById('letters').innerHTML =
    '<th class="corner"><svg width="8" height="8" viewBox="0 0 8 8"><path d="M8 0v8H0z" fill="#b4b4b4"/></svg></th>' +
    letters.map(l => `<th${l === 'A' ? ' class="selected"' : ''}>${l}</th>`).join('') +
    '<th></th>';

let html = `<tr class="title-row"><th>1</th><td class="report-title" colspan="4">DATA REPORT</td>${blanks}</tr>`;
html += `<tr><th>2</th><td class="report-range" colspan="4">21/05/2019 00:00:00   to   21/05/2019 23:59:59</td>${blanks}</tr>`;

const heads = ['DATETIME', 'Average Voltage (V)', 'AverageCurrent (A)', 'Kilowatt Hour (KWh)'];
html += `<tr><th>3</th>${heads.map(h => `<td class="cell head">${h}</td>`).join('')}${blanks}</tr>`;

readings.forEach((values, hour) => {
    const time = `21-05-2019 ${String(hour).padStart(2, '0')}h`;
    const cells = [time, ...values].map(v => `<td class="cell">${v}</td>`).join('');
    html += `<tr><th>${hour + 4}</th>${cells}${blanks}</tr>`;
});

document.getElementById('rows').innerHTML = html;
```
